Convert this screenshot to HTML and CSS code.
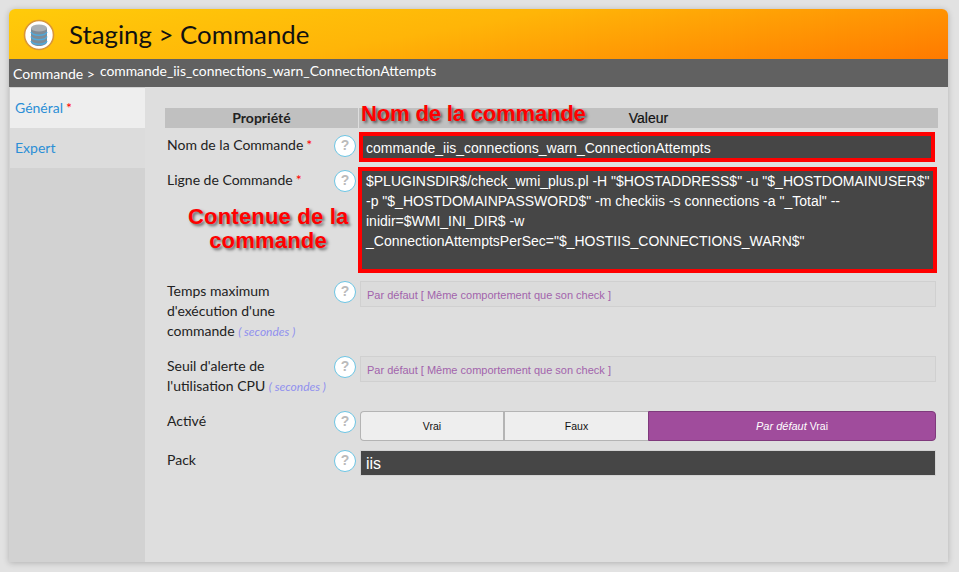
FILE: index.html
```html
<!DOCTYPE html>
<html lang="fr">
<head>
<meta charset="utf-8">
<title>Staging > Commande</title>
<link rel="stylesheet" href="styles.css">
</head>
<body>
<div class="window">
  <header class="head">
    <svg class="logo" viewBox="0 0 32 32" width="32" height="32">
      <circle cx="16" cy="16" r="14.5" fill="#fff" stroke="#d9963a" stroke-width="1.6"/>
      <path d="M8 9v14c0 2.2 3.6 4 8 4s8-1.800 8-4V9z" fill="#7f8b96"/>
      <ellipse cx="16" cy="9" rx="8" ry="3.600" fill="#aab0b5"/>
      <path d="M8 13c1 2.400 4 3.200 8 3.200s7-.8 8-3.200M8 17.500c1 2.400 4 3.200 8 3.200s7-.8 8-3.200M8 22c1 2.400 4 3.200 8 3.200s7-.8 8-3.200" fill="none" stroke="#4fa9dc" stroke-width="1.500"/>
    </svg>
    <h1 class="title">Staging &gt; Commande</h1>
  </header>
  <div class="crumb"><span class="crumb-a">Commande &gt;</span><span class="crumb-b">commande_iis_connections_warn_ConnectionAttempts</span></div>
  <div class="body">
    <nav class="side">
      <a class="tab tab-on">Général<b class="star">*</b></a>
      <a class="tab">Expert</a>
    </nav>
    <main class="main">
      <div class="thead">
        <div class="th th-l">Propriété</div>
        <div class="th th-r">Valeur<span class="note note-name">Nom de la commande</span></div>
      </div>
      <div class="row row-1">
        <div class="label pad">Nom de la Commande<b class="star">*</b></div>
        <div class="help pad">?</div>
        <div class="dark red red-1">commande_iis_connections_warn_ConnectionAttempts</div>
      </div>
      <div class="row row-2">
        <div class="label pad">Ligne de Commande<b class="star">*</b></div>
        <div class="help pad">?</div>
        <div class="dark red red-2">$PLUGINSDIR$/check_wmi_plus.pl -H "$HOSTADDRESS$" -u "$_HOSTDOMAINUSER$" -p "$_HOSTDOMAINPASSWORD$" -m checkiis -s connections -a "_Total" --<br>inidir=$WMI_INI_DIR$ -w<br>_ConnectionAttemptsPerSec="$_HOSTIIS_CONNECTIONS_WARN$"</div>
        <div class="note note-body">Contenue de la<br>commande</div>
      </div>
      <div class="row row-3">
        <div class="label">Temps maximum d'exécution d'une commande <i class="unit">( secondes )</i></div>
        <div class="help">?</div>
        <div class="ghost">Par défaut [ Même comportement que son check ]</div>
      </div>
      <div class="row row-4">
        <div class="label">Seuil d'alerte de l'utilisation CPU <i class="unit">( secondes )</i></div>
        <div class="help">?</div>
        <div class="ghost">Par défaut [ Même comportement que son check ]</div>
      </div>
      <div class="row row-5">
        <div class="label">Activé</div>
        <div class="help">?</div>
        <div class="toggle">
          <div class="opt opt-a">Vrai</div>
          <div class="opt opt-b">Faux</div>
          <div class="opt opt-c"><i>Par défaut</i> Vrai</div>
        </div>
      </div>
      <div class="row row-6">
        <div class="label">Pack</div>
        <div class="help">?</div>
        <div class="dark pack">iis</div>
      </div>
    </main>
  </div>
</div>
</body>
</html>
```
FILE: styles.css
```css
* { box-sizing: border-box; }
html, body { height: 100%; }
body {
  margin: 0;
  padding: 9px 11px 10px 9px;
  background: #e2e2e2;
  font-family: Lato, sans-serif;
  overflow: hidden;
}
.window {
  height: 553px;
  display: flex;
  flex-direction: column;
  background: #dedede;
  border-radius: 6px 6px 0 0;
  box-shadow: 0 1px 6px rgba(0,0,0,.22);
  overflow: hidden;
}
.head {
  height: 50px;
  flex: none;
  display: flex;
  align-items: center;
  padding-left: 14px;
  background: linear-gradient(170deg, #ffcb0a 0%, #ffb508 45%, #ff7a00 100%);
}
.logo { flex: none; display: block; margin-top: 1px; }
.title {
  margin: 0 0 0 14px;
  font-size: 25.8px;
  font-weight: 400;
  color: #111;
  line-height: 50px;
}
.crumb {
  height: 28px;
  flex: none;
  display: flex;
  align-items: center;
  padding-left: 4px;
  background: #616161;
  color: #fff;
  white-space: nowrap;
}
.crumb-a { font-size: 14px; margin-top: 1px; }
.crumb-b { font-size: 13.9px; margin-left: 5px; margin-top: -5px; }
.body { flex: 1; display: flex; min-height: 0; }
.side {
  width: 136px;
  flex: none;
  padding: 1px 0 0 1px;
  background: #d2d2d2;
}
.tab {
  display: block;
  height: 40px;
  padding: 11px 0 0 5px;
  font-size: 14px;
  line-height: 18px;
  color: #2b8fd6;
  background: #dcdcdc;
}
.tab-on { background: #eeeeee; }
.star { color: #f00; font-weight: 400; margin-left: 3px; }
.main {
  flex: 1;
  padding: 21px 0 0 20px;
  min-width: 0;
}
.thead { display: flex; height: 20px; gap: 1px; }
.th {
  background: #c0c0c0;
  font-size: 14px;
  font-weight: 700;
  line-height: 20px;
  text-align: center;
  color: #222;
}
.th-l { width: 193px; flex: none; }
.th-r {
  width: 579px;
  flex: none;
  position: relative;
  font-family: "Liberation Sans", sans-serif;
  font-weight: 400;
  color: #111;
  -webkit-text-stroke: .2px #111;
}
.row { display: flex; align-items: flex-start; }
.label {
  width: 169px;
  flex: none;
  padding-left: 2px;
  padding-right: 3px;
  font-size: 14px;
  line-height: 20px;
  color: #222;
}
.row-1 .label, .row-2 .label { padding-right: 0; white-space: nowrap; }
.pad { margin-top: 3px; }
.help {
  width: 22px;
  height: 22px;
  flex: none;
  border: 1.5px solid #6cc5e4;
  border-radius: 50%;
  background: #fff;
  color: #bbbbbb;
  font-family: "Liberation Sans", sans-serif;
  font-size: 14px;
  font-weight: 700;
  line-height: 19px;
  text-align: center;
}
.unit { color: #9090ee; font-size: 12px; }
.dark {
  background: #464646;
  color: #fff;
  font-family: "Liberation Sans", sans-serif;
  font-size: 14px;
  line-height: 20px;
}
.red { border: 4px solid #f00; padding: 2px 0 0 3px; }
.row-1 { margin-top: 4px; }
.red-1 { margin-left: 3px; width: 576px; height: 30px; }
.row-2 { margin-top: 5px; position: relative; }
.red-2 {
  margin-left: 2px;
  width: 579px;
  height: 106px;
  padding: 0 0 0 4px;
}
.note {
  position: absolute;
  color: #f00;
  font-family: "Liberation Sans", sans-serif;
  font-size: 22px;
  font-weight: 700;
  line-height: 24px;
  text-align: center;
  text-shadow: 2px 2px 3px rgba(0,0,0,.55);
  -webkit-text-stroke: 0;
  white-space: nowrap;
}
.note-name { left: 2px; top: -6px; letter-spacing: -.15px; }
.note-body { left: 23px; top: 38px; width: 160px; letter-spacing: .2px; }
.row-3 { margin-top: 8px; }
.row-4 { margin-top: 15px; }
.row-5 { margin-top: 15px; }
.row-6 { margin-top: 9px; }
.row-3 .label { height: 60px; }
.row-4 .label { height: 40px; }
.ghost {
  margin-left: 4px;
  width: 576px;
  height: 26px;
  border: 1px solid #d0d0d0;
  background: #dbdbdb;
  padding-left: 6px;
  color: #a264ac;
  font-family: "Liberation Sans", sans-serif;
  font-size: 11px;
  line-height: 26px;
}
.toggle {
  margin-left: 4px;
  width: 576px;
  height: 30px;
  display: flex;
  font-family: "Liberation Sans", sans-serif;
  font-size: 10.5px;
  line-height: 28px;
  text-align: center;
}
.opt {
  border: 1px solid #b4b4b4;
  background: #eeeeee;
  color: #111;
}
.opt-a { width: 143px; border-radius: 4px 0 0 4px; border-right: 0; }
.opt-b { width: 145px; border-left-width: 2px; border-right: 0; }
.opt-c {
  flex: 1;
  background: #a04c9c;
  border-color: #7f3a7c;
  border-radius: 0 4px 4px 0;
  color: #fff;
}
.opt-c i { font-size: 11px; }
.pack {
  margin-left: 4px;
  width: 576px;
  height: 26px;
  border: 1px solid #d2d2d2;
  padding-left: 5px;
  font-size: 16px;
  line-height: 25px;
}
```
